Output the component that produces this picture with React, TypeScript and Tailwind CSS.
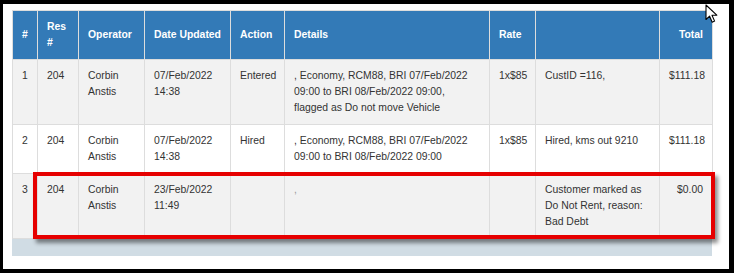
import React from "react"

type Row = {
    n: number
    res: string
    operator: string
    date: string
    time: string
    action: string
    details: React.ReactNode
    rate: string
    note: React.ReactNode
    total: string
    shaded: boolean
}

const rows: Row[] = [
    {
        n: 1,
        res: "204",
        operator: "Corbin Anstis",
        date: "07/Feb/2022",
        time: "14:38",
        action: "Entered",
        details: ", Economy, RCM88, BRI 07/Feb/2022 09:00 to BRI 08/Feb/2022 09:00, flagged as Do not move Vehicle",
        rate: "1x$85",
        note: "CustID =116,",
        total: "$111.18",
        shaded: true,
    },
    {
        n: 2,
        res: "204",
        operator: "Corbin Anstis",
        date: "07/Feb/2022",
        time: "14:38",
        action: "Hired",
        details: ", Economy, RCM88, BRI 07/Feb/2022 09:00 to BRI 08/Feb/2022 09:00",
        rate: "1x$85",
        note: "Hired, kms out 9210",
        total: "$111.18",
        shaded: false,
    },
    {
        n: 3,
        res: "204",
        operator: "Corbin Anstis",
        date: "23/Feb/2022",
        time: "11:49",
        action: "",
        details: <span className="text-[#999]">,</span>,
        rate: "",
        note: "Customer marked as Do Not Rent, reason: Bad Debt",
        total: "$0.00",
        shaded: true,
    },
]

const th = "border border-[#dddddd] px-[9px] py-[8px] text-left align-middle font-bold"
const td = "border border-[#dddddd] px-[9px] py-[8px] text-left align-top"

export default function App() {
    return (
        <div className="w-[734px] h-[273px] bg-black pl-[3px] pt-[4px] pr-[5px] pb-[4px]">
            <div
                className="relative h-full bg-white pl-[9px] pt-[6px] text-[10.4px] leading-[16px] text-[#333333]"
                style={{ fontFamily: '"Liberation Sans", Arial, sans-serif' }}
            >
                <table className="w-[700px] table-fixed border-collapse">
                    <colgroup>
                        <col className="w-[25px]" />
                        <col className="w-[41px]" />
                        <col className="w-[66px]" />
                        <col className="w-[86px]" />
                        <col className="w-[54px]" />
                        <col className="w-[205px]" />
                        <col className="w-[46px]" />
                        <col className="w-[124px]" />
                        <col className="w-[53px]" />
                    </colgroup>
                    <thead>
                        <tr className="bg-[#337ab7] text-white">
                            <th className={th}>#</th>
                            <th className={th}>Res<br />#</th>
                            <th className={th}>Operator</th>
                            <th className={th}>Date Updated</th>
                            <th className={th}>Action</th>
                            <th className={th}>Details</th>
                            <th className={th}>Rate</th>
                            <th className={th}></th>
                            <th className={`${th} !text-right`}>Total</th>
                        </tr>
                    </thead>
                    <tbody>
                        {rows.map((r) => (
                            <tr key={r.n} className={r.shaded ? "bg-[#f2f2f2]" : "bg-white"}>
                                <td className={td}>{r.n}</td>
                                <td className={td}>{r.res}</td>
                                <td className={td}>{r.operator}</td>
                                <td className={td}>{r.date}<br />{r.time}</td>
                                <td className={td}>{r.action}</td>
                                <td className={td}>{r.details}</td>
                                <td className={td}>{r.rate}</td>
                                <td className={td}>{r.note}</td>
                                <td className={`${td} !text-right`}>{r.total}</td>
                            </tr>
                        ))}
                    </tbody>
                </table>
                <div className="h-[17px] w-[700px] bg-[#d0dce4]" />

                {/* highlight box */}
                <div className="absolute left-[30px] top-[168px] w-[682px] h-[67px] border-4 border-[#e60000] shadow-[3px_4px_4px_rgba(0,0,0,0.45)]" />

                {/* mouse pointer */}
                <svg className="absolute left-[702px] top-0" width="14" height="20" viewBox="0 0 14 20">
                    <path
                        d="M1 1 L1 15.5 L4.6 12.2 L7.2 18.2 L9.6 17.1 L7 11.2 L11.8 11.2 Z"
                        fill="white"
                        stroke="black"
                        strokeWidth="1.1"
                        strokeLinejoin="round"
                    />
                </svg>
            </div>
        </div>
    )
}
